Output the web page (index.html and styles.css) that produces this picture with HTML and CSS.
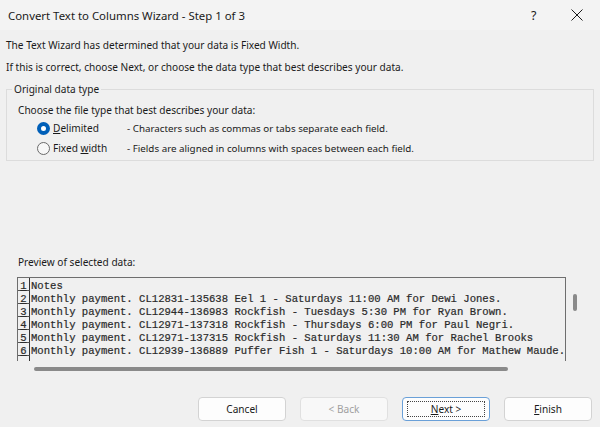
FILE: index.html
```html
<!DOCTYPE html>
<html lang="en">
<head>
  <meta charset="UTF-8">
  <title>Convert Text to Columns Wizard - Step 1 of 3</title>
  <link rel="stylesheet" href="styles.css">
</head>
<body>
  <div class="titlebar">
    <span class="title">Convert Text to Columns Wizard - Step 1 of 3</span>
    <span class="help">?</span>
    <span class="close">
      <svg width="12" height="12" viewBox="0 0 12 12"><path d="M0.5 0.5 L11.5 11.5 M11.5 0.5 L0.5 11.5" stroke="#1a1a1a" stroke-width="1"/></svg>
    </span>
  </div>

  <div class="content">
    <p class="intro">The Text Wizard has determined that your data is Fixed Width.</p>
    <p class="intro second">If this is correct, choose Next, or choose the data type that best describes your data.</p>

    <fieldset class="group">
      <legend>Original data type</legend>
      <p class="choose">Choose the file type that best describes your data:</p>
      <div class="option">
        <span class="radio checked"></span>
        <span class="opt-label"><u>D</u>elimited</span>
        <span class="opt-desc">- Characters such as commas or tabs separate each field.</span>
      </div>
      <div class="option">
        <span class="radio"></span>
        <span class="opt-label">Fixed <u>w</u>idth</span>
        <span class="opt-desc">- Fields are aligned in columns with spaces between each field.</span>
      </div>
    </fieldset>

    <p class="preview-label">Preview of selected data:</p>

    <div class="preview-wrap">
      <div class="preview">
        <div class="row"><span class="num">1</span><span class="line">Notes</span></div>
        <div class="row"><span class="num">2</span><span class="line">Monthly payment. CL12831-135638 Eel 1 - Saturdays 11:00 AM for Dewi Jones.</span></div>
        <div class="row"><span class="num">3</span><span class="line">Monthly payment. CL12944-136983 Rockfish - Tuesdays 5:30 PM for Ryan Brown.</span></div>
        <div class="row"><span class="num">4</span><span class="line">Monthly payment. CL12971-137318 Rockfish - Thursdays 6:00 PM for Paul Negri.</span></div>
        <div class="row"><span class="num">5</span><span class="line">Monthly payment. CL12971-137315 Rockfish - Saturdays 11:30 AM for Rachel Brooks</span></div>
        <div class="row"><span class="num">6</span><span class="line">Monthly payment. CL12939-136889 Puffer Fish 1 - Saturdays 10:00 AM for Mathew Maude.</span></div>
        <div class="row"><span class="num"></span><span class="line"></span></div>
      </div>
      <div class="vscroll"><div class="vthumb"></div></div>
    </div>
    <div class="hscroll"><div class="hthumb"></div></div>
  </div>

  <div class="buttons">
    <button class="btn">Cancel</button>
    <button class="btn disabled">&lt; Back</button>
    <button class="btn default"><span class="focus"><u>N</u>ext &gt;</span></button>
    <button class="btn"><u>F</u>inish</button>
  </div>
</body>
</html>
```

FILE: styles.css
```css
body {
  margin: 0;
  width: 600px;
  height: 427px;
  overflow: hidden;
  background-color: #f0f0f0;
  font-family: "Noto Sans", "Open Sans", sans-serif;
  font-size: 10.1px;
  color: #1a1a1a;
}
.titlebar {
  height: 30px;
  display: flex;
  align-items: center;
  background-color: #f3f3f3;
  padding-left: 8px;
}
.title {
  flex: 1;
  font-size: 11.4px;
}
.help {
  width: 14px;
  font-size: 12.5px;
  margin-right: 26px;
}
.close {
  display: flex;
  margin-right: 17px;
}
.content {
  padding: 0 6px;
}
.intro {
  margin: 7px 0 0;
  line-height: 16px;
}
.intro.second {
  margin-top: 6px;
}
.group {
  margin: 6px 0 0;
  padding: 0 0 2px;
  border: 1px solid #dcdcdc;
  border-radius: 0;
}
.group legend {
  margin-left: 5px;
  padding: 0 2px;
  line-height: 16px;
}
.choose {
  margin: 5px 0 0 11px;
  line-height: 16px;
}
.option {
  display: flex;
  align-items: center;
  height: 20px;
  padding-left: 30px;
}
.radio {
  width: 11px;
  height: 11px;
  border: 1px solid #6a6a6a;
  border-radius: 50%;
  background-color: #f7f7f7;
  margin-right: 3px;
}
.radio.checked {
  width: 5px;
  height: 5px;
  border: 4px solid #005fb8;
  background-color: #ffffff;
}
.opt-label {
  width: 74px;
}
.opt-desc {
  font-size: 9.8px;
}
.preview-label {
  margin: 93px 0 0 12px;
  line-height: 16px;
}
.preview-wrap {
  display: flex;
  margin-top: 7px;
  margin-left: 11px;
}
.preview {
  width: 547px;
  height: 83px;
  overflow: hidden;
  border: 1px solid #6e6e6e;
  border-bottom: none;
  font-family: "Liberation Mono", "Courier New", monospace;
  font-size: 10.6px;
  color: #2a2a2a;
  -webkit-text-stroke: 0.2px #2a2a2a;
}
.row {
  display: flex;
  height: 13px;
  line-height: 17px;
  white-space: pre;
}
.num {
  flex: none;
  width: 12px;
  text-align: center;
  border-right: 1px solid #333;
  border-bottom: 1px solid #555;
  box-sizing: border-box;
  text-decoration: underline;
}
.line {
  padding-left: 1px;
}
.vscroll {
  margin-left: 7px;
  padding-top: 17px;
}
.vthumb {
  width: 4px;
  height: 17px;
  background-color: #8a8a8a;
  border-radius: 2px;
}
.hscroll {
  padding: 6px 0 0 28px;
}
.hthumb {
  width: 474px;
  height: 4px;
  background-color: #8a8a8a;
  border-radius: 2px;
}
.buttons {
  display: flex;
  justify-content: flex-end;
  gap: 14px;
  padding-right: 8px;
  margin-top: 26px;
}
.btn {
  width: 88px;
  height: 24px;
  padding: 0;
  font-family: "Noto Sans", "Open Sans", sans-serif;
  font-size: 10.1px;
  color: #1a1a1a;
  background-color: #fdfdfd;
  border: 1px solid #d3d3d3;
  border-radius: 4px;
}
.btn.disabled {
  color: #a0a0a0;
  background-color: #f8f8f8;
  border-color: #e0e0e0;
}
.btn.default {
  border-color: #6aa0d8;
  display: flex;
  padding: 3px 4px;
}
.focus {
  flex: 1;
  display: flex;
  align-items: center;
  justify-content: center;
  border: 1px dotted #444;
}
```
